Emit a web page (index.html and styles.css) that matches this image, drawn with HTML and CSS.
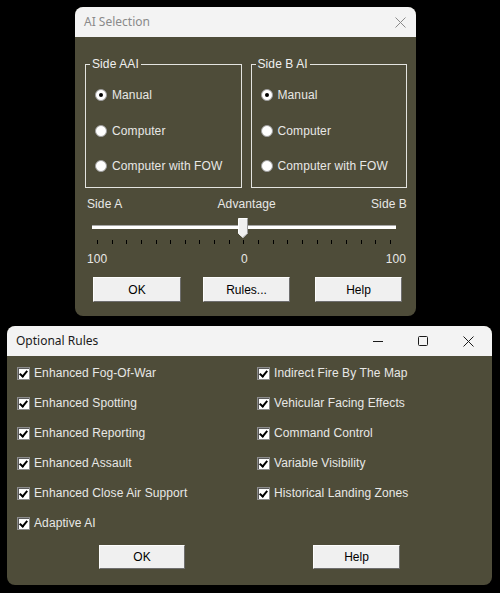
FILE: index.html
```html
<!DOCTYPE html>
<html>
<head>
<meta charset="utf-8">
<link rel="stylesheet" href="styles.css">
</head>
<body>
<div class="desk">
  <section class="win win-ai">
    <header class="titlebar inactive">
      <span class="title">AI Selection</span>
      <span class="tb-btn close-ai">
        <svg width="11" height="11" viewBox="0 0 11 11"><path d="M0.5 0.5 L10.5 10.5 M10.5 0.5 L0.5 10.5" stroke="#8a8a8a" stroke-width="1" fill="none"/></svg>
      </span>
    </header>
    <div class="win-body ai-body">
      <div class="groups">
        <fieldset class="group">
          <legend>Side AAI</legend>
          <div class="group-rows">
            <div class="radio"><span class="rb on"></span>Manual</div>
            <div class="radio"><span class="rb"></span>Computer</div>
            <div class="radio"><span class="rb"></span>Computer with FOW</div>
          </div>
        </fieldset>
        <fieldset class="group">
          <legend>Side B AI</legend>
          <div class="group-rows">
            <div class="radio"><span class="rb on"></span>Manual</div>
            <div class="radio"><span class="rb"></span>Computer</div>
            <div class="radio"><span class="rb"></span>Computer with FOW</div>
          </div>
        </fieldset>
      </div>
      <div class="slider">
        <div class="slider-labels"><span>Side A</span><span>Advantage</span><span>Side B</span></div>
        <div class="track-wrap">
          <div class="track"></div>
          <svg class="thumb" width="11" height="20" viewBox="0 0 11 20">
            <path d="M0.5 0.5 H9.5 V15.5 L5 19.5 L0.5 15.5 Z" fill="#f0f0f0" stroke="#ffffff" stroke-width="1"/>
            <path d="M9.5 0.5 V15.5 L5 19.5" fill="none" stroke="#9a9a9a" stroke-width="1"/>
          </svg>
        </div>
        <div class="ticks">
          <i></i><i></i><i></i><i></i><i></i><i></i><i></i><i></i><i></i><i></i><i></i><i></i><i></i><i></i><i></i><i></i><i></i><i></i><i></i><i></i><i></i>
        </div>
        <div class="slider-nums"><span>100</span><span>0</span><span>100</span></div>
      </div>
      <div class="buttons ai-buttons">
        <button class="btn b-ok">OK</button>
        <button class="btn b-rules">Rules...</button>
        <button class="btn b-help">Help</button>
      </div>
    </div>
  </section>

  <section class="win win-rules">
    <header class="titlebar">
      <span class="title">Optional Rules</span>
      <span class="tb-controls">
        <span class="tb-btn">
          <svg width="11" height="11" viewBox="0 0 11 11"><path d="M0 5.5 H10" stroke="#1a1a1a" stroke-width="1" fill="none"/></svg>
        </span>
        <span class="tb-btn">
          <svg width="11" height="11" viewBox="0 0 11 11"><rect x="0.5" y="0.5" width="9" height="9" rx="1" stroke="#1a1a1a" stroke-width="1" fill="none"/></svg>
        </span>
        <span class="tb-btn">
          <svg width="11" height="11" viewBox="0 0 11 11"><path d="M0.5 0.5 L10.5 10.5 M10.5 0.5 L0.5 10.5" stroke="#1a1a1a" stroke-width="1" fill="none"/></svg>
        </span>
      </span>
    </header>
    <div class="win-body rules-body">
      <div class="cols">
        <div class="col col-left">
          <div class="check"><span class="cb"></span>Enhanced Fog-Of-War</div>
          <div class="check"><span class="cb"></span>Enhanced Spotting</div>
          <div class="check"><span class="cb"></span>Enhanced Reporting</div>
          <div class="check"><span class="cb"></span>Enhanced Assault</div>
          <div class="check"><span class="cb"></span>Enhanced Close Air Support</div>
          <div class="check"><span class="cb"></span>Adaptive AI</div>
        </div>
        <div class="col col-right">
          <div class="check"><span class="cb"></span>Indirect Fire By The Map</div>
          <div class="check"><span class="cb"></span>Vehicular Facing Effects</div>
          <div class="check"><span class="cb"></span>Command Control</div>
          <div class="check"><span class="cb"></span>Variable Visibility</div>
          <div class="check"><span class="cb"></span>Historical Landing Zones</div>
        </div>
      </div>
      <div class="buttons rules-buttons">
        <button class="btn r-ok">OK</button>
        <button class="btn r-help">Help</button>
      </div>
    </div>
  </section>
</div>
</body>
</html>
```

FILE: styles.css
```css
html, body {
  margin: 0;
  padding: 0;
  background: #000;
}
body {
  width: 500px;
  height: 593px;
  overflow: hidden;
  font-family: "Liberation Sans", Arial, sans-serif;
  font-size: 12px;
}
.desk {
  display: flex;
  flex-direction: column;
  align-items: flex-start;
}
.win {
  background: #4e4c39;
  border-radius: 8px;
  overflow: hidden;
  display: flex;
  flex-direction: column;
  box-sizing: border-box;
}
.win-ai {
  margin: 7px 0 0 75px;
  width: 341px;
  height: 309px;
}
.win-rules {
  margin: 10px 0 0 7px;
  width: 485px;
  height: 259px;
}
.titlebar {
  height: 30px;
  flex: none;
  background: #f3f3f3;
  display: flex;
  align-items: center;
  justify-content: space-between;
  padding-left: 9px;
  box-sizing: border-box;
  font-family: "Noto Sans", "Open Sans", sans-serif;
  font-size: 12px;
  color: #1a1a1a;
}
.titlebar.inactive { color: #8a8a8a; }
.title { position: relative; top: -1px; }
.tb-btn {
  display: flex;
  align-items: center;
  justify-content: center;
}
.close-ai { margin-right: 10px; }
.tb-controls {
  display: flex;
  align-items: center;
  gap: 34px;
  margin-right: 18px;
}
.win-body {
  flex: 1;
  color: #e8e8e6;
  letter-spacing: 0.1px;
}

/* AI window */
.ai-body { padding: 20px 9px 0 10px; }
.groups {
  display: flex;
  gap: 9px;
}
.group {
  margin: 0;
  padding: 0 0 13px 0;
  width: 157px;
  box-sizing: border-box;
  border: 1px solid #e4e4e0;
  min-width: 0;
}
.group legend {
  margin-left: 4px;
  padding: 0 2px;
  line-height: 14px;
  color: #f0f0f0;
}
.group-rows {
  padding: 16px 0 0 9px;
  display: flex;
  flex-direction: column;
  gap: 19.5px;
}
.radio {
  display: flex;
  align-items: center;
  height: 16px;
  line-height: 16px;
}
.rb {
  width: 12px;
  height: 12px;
  box-sizing: border-box;
  border-radius: 50%;
  background: #fff;
  border: 1px solid #9d9d9d;
  margin-right: 5px;
  display: flex;
  align-items: center;
  justify-content: center;
  flex: none;
}
.rb.on::after {
  content: "";
  width: 4px;
  height: 4px;
  border-radius: 50%;
  background: #000;
}

.slider {
  padding: 9px 0 0 2px;
}
.slider-labels, .slider-nums {
  display: flex;
  justify-content: space-between;
  line-height: 14px;
  height: 14px;
}
.track-wrap {
  position: relative;
  height: 20px;
  margin: 7px 11px 0 5px;
}
.track {
  position: relative;
  top: 7px;
  height: 4px;
  box-sizing: border-box;
  background: #fff;
  border-top: 1px solid #a6a6a6;
}
.thumb {
  position: absolute;
  left: 146px;
  top: 0;
}
.ticks {
  display: flex;
  justify-content: space-between;
  margin: 2px 16px 0 10px;
  height: 4px;
}
.ticks i {
  width: 1px;
  height: 4px;
  background: #000;
}
.slider-nums { margin-top: 8px; padding-right: 1px; }
.slider-nums span:nth-child(2) { position: relative; left: -2px; }

.btn {
  font-family: "Liberation Sans", Arial, sans-serif;
  font-size: 12px;
  color: #000;
  background: #f0f0f0;
  border: 1px solid;
  border-color: #fdfdfd #6e6e6e #6e6e6e #fdfdfd;
  padding: 0;
  height: 25px;
  box-sizing: border-box;
}
.ai-buttons {
  display: flex;
  margin-top: 11px;
}
.b-ok { margin-left: 8px; width: 88px; }
.b-rules { margin-left: 22px; width: 87px; }
.b-help { margin-left: 25px; width: 87px; }

/* Rules window */
.rules-body { padding: 9px 0 0 10px; }
.cols { display: flex; }
.col {
  display: flex;
  flex-direction: column;
  gap: 14px;
}
.col-left { width: 240px; }
.check {
  display: flex;
  align-items: center;
  height: 16px;
  line-height: 16px;
}
.cb {
  width: 13px;
  height: 13px;
  box-sizing: border-box;
  background: #fff;
  border: 1px solid #8c8c8c;
  box-shadow: inset 1px 1px 0 #5a5a5a;
  margin-right: 4px;
  flex: none;
  position: relative;
}
.cb::after {
  content: "";
  position: absolute;
  left: 3px;
  top: 1px;
  width: 3px;
  height: 6px;
  border: solid #000;
  border-width: 0 2px 2px 0;
  transform: rotate(40deg);
}
.rules-buttons {
  display: flex;
  margin-top: 14px;
}
.r-ok { margin-left: 82px; width: 86px; height: 24px; }
.r-help { margin-left: 128px; width: 87px; height: 24px; }
```
